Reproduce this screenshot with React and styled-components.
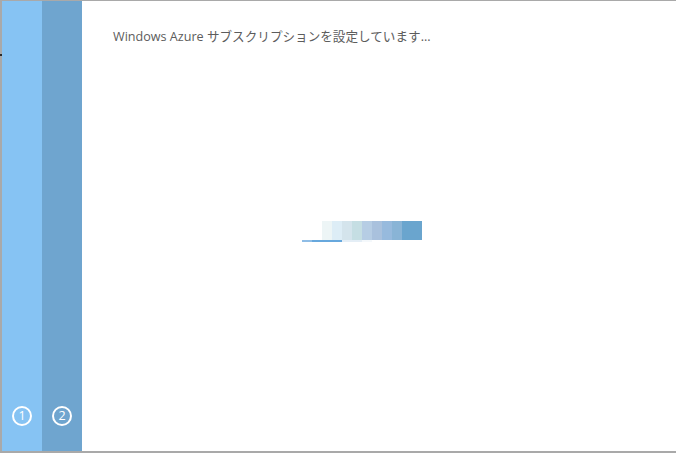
import React from "react";
import styled, { createGlobalStyle } from "styled-components";

const Global = createGlobalStyle`
  html, body { margin: 0; padding: 0; background: #fff; }
  body { width: 676px; height: 453px; overflow: hidden; }
`;

const Frame = styled.div`
  position: relative;
  box-sizing: border-box;
  width: 676px;
  height: 453px;
  border-top: 1px solid #a9a9a9;
  border-left: 2px solid #a9a9a9;
  border-bottom: 2px solid #a9a9a9;
  display: flex;
  background: #fff;
`;

const Tick = styled.div`
  position: absolute;
  left: -2px;
  top: 53px;
  width: 2px;
  height: 2px;
  background: #2a2a2a;
`;

const StepColumn = styled.div`
  width: 40px;
  flex: none;
  background: ${(p) => p.$bg};
  display: flex;
  flex-direction: column;
  justify-content: flex-end;
  align-items: center;
  padding-bottom: 25px;
  box-sizing: border-box;
`;

const StepNumber = styled.div`
  width: 16px;
  height: 16px;
  border: 2px solid #fff;
  border-radius: 50%;
  color: #fff;
  font-family: "Open Sans", "DejaVu Sans", sans-serif;
  font-size: 12.5px;
  line-height: 16px;
  text-align: center;
  box-sizing: content-box;
`;

const Content = styled.div`
  flex: 1;
  display: flex;
  flex-direction: column;
  padding: 26px 0 0 31px;
`;

const Title = styled.div`
  font-family: "Open Sans", "Noto Sans CJK JP", sans-serif;
  font-size: 12.6px;
  color: #5c5c5c;
  line-height: 20px;
  white-space: nowrap;
`;

const LoaderArea = styled.div`
  margin-top: 174px;
  margin-left: 189px;
  position: relative;
  width: 120px;
  height: 21px;
`;

const Squares = styled.div`
  display: flex;
  margin-left: 20px;
  height: 19px;
`;

const Square = styled.div`
  width: ${(p) => p.$w}px;
  height: 19px;
  background: ${(p) => p.$c};
`;

const Underline = styled.div`
  display: flex;
  height: 2px;
`;

const Line = styled.div`
  width: ${(p) => p.$w}px;
  height: 2px;
  background: ${(p) => p.$c};
`;

const squares = [
  ["#edf5f6", 10],
  ["#ddedf6", 10],
  ["#d4e4ec", 10],
  ["#c5dee3", 10],
  ["#b6cde4", 10],
  ["#a9c1dd", 10],
  ["#97badd", 10],
  ["#89b4d6", 10],
  ["#6aa5ce", 20],
];

const lines = [
  ["#8fbde6", 10],
  ["#67a8dd", 30],
  ["#e4eef6", 20],
  ["#f4f8fb", 10],
];

export default function App() {
  return (
    <>
      <Global />
      <Frame>
        <Tick />
        <StepColumn $bg="#86c3f3">
          <StepNumber>1</StepNumber>
        </StepColumn>
        <StepColumn $bg="#6fa5cf">
          <StepNumber>2</StepNumber>
        </StepColumn>
        <Content>
          <Title>Windows Azure サブスクリプションを設定しています...</Title>
          <LoaderArea>
            <Squares>
              {squares.map(([c, w], i) => (
                <Square key={i} $c={c} $w={w} />
              ))}
            </Squares>
            <Underline>
              {lines.map(([c, w], i) => (
                <Line key={i} $c={c} $w={w} />
              ))}
            </Underline>
          </LoaderArea>
        </Content>
      </Frame>
    </>
  );
}
